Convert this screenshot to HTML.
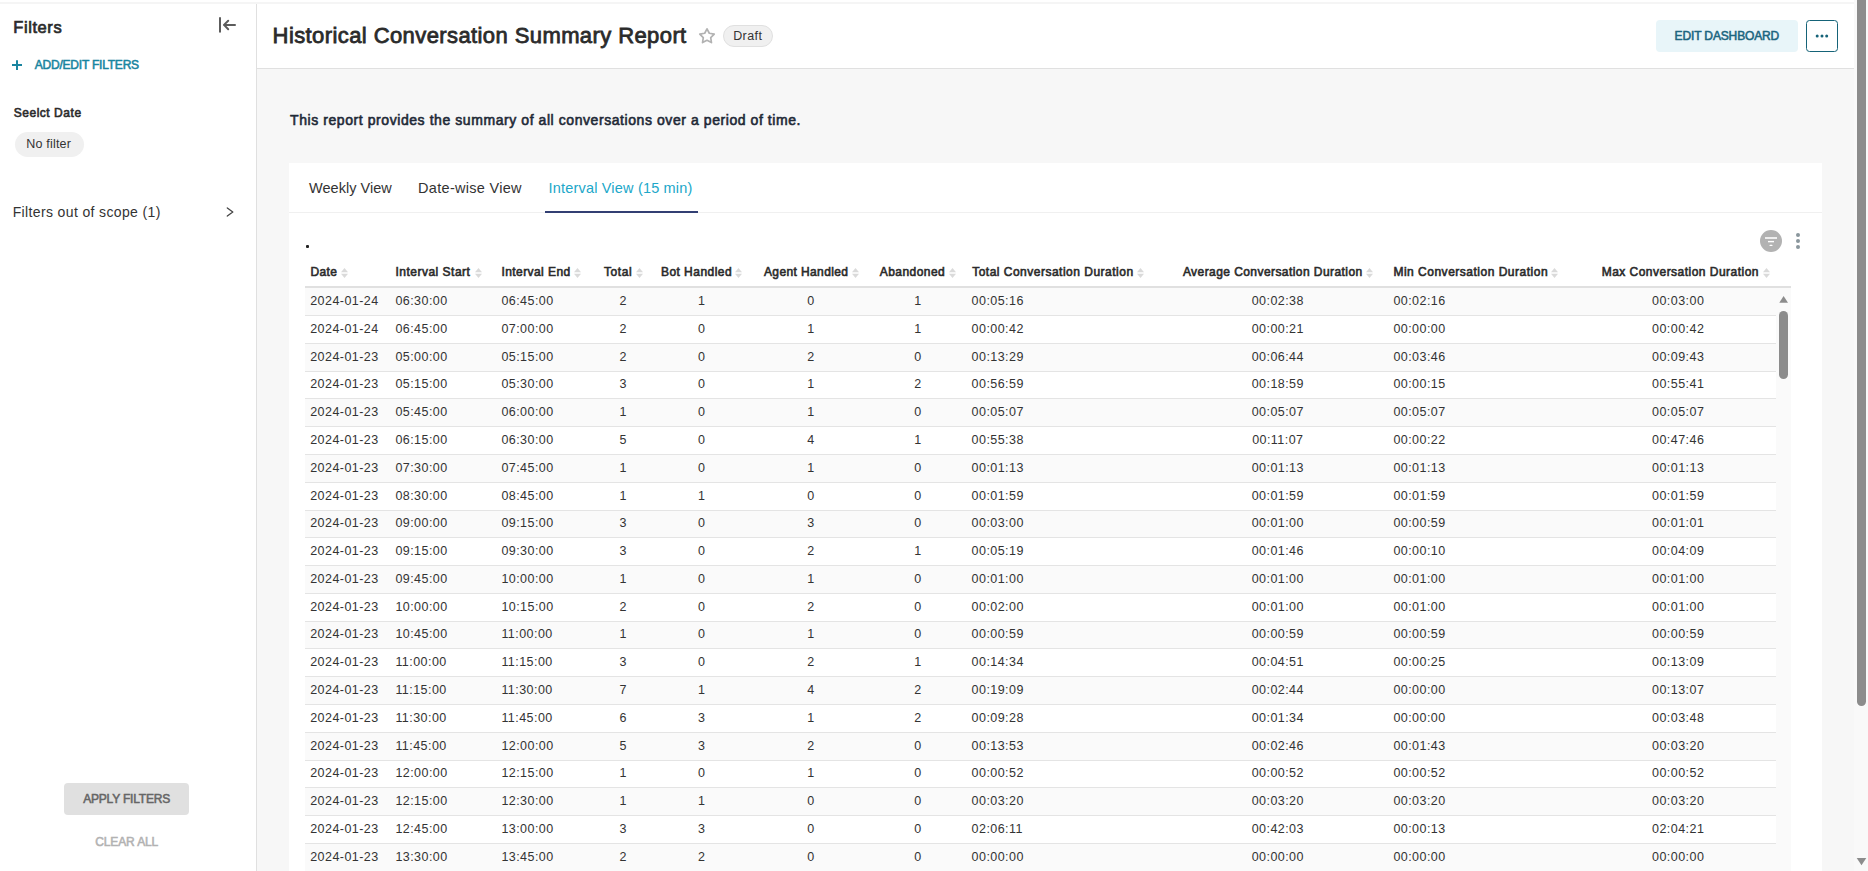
<!DOCTYPE html>
<html><head><meta charset="utf-8"><title>Historical Conversation Summary Report</title>
<style>
html,body{margin:0;padding:0}
body{width:1868px;height:871px;overflow:hidden;position:relative;background:#fff;font-family:"Liberation Sans",sans-serif}
.t{position:absolute;white-space:nowrap;line-height:normal}
.a{position:absolute}
.c{position:absolute;white-space:nowrap;line-height:normal;font-size:12.5px;color:#333333;letter-spacing:0.45px}
.cc{position:absolute;white-space:nowrap;line-height:normal;font-size:12.5px;color:#333333;letter-spacing:0.45px;width:80px;text-align:center}
</style></head><body>

<div class="a" style="left:0;top:2px;width:1854px;height:2px;background:#f5f5f5"></div>
<div class="a" style="left:256px;top:4px;width:1px;height:867px;background:#e0e0e0"></div>
<div class="a" style="left:257px;top:69px;width:1597px;height:802px;background:#f7f7f7"></div>
<div class="a" style="left:257px;top:68px;width:1597px;height:1px;background:#e0e0e0"></div>
<div class="a" style="left:289px;top:163px;width:1533px;height:708px;background:#fff"></div>
<div class="a" style="left:289px;top:212px;width:1533px;height:1px;background:#f0f0f0"></div>
<div class="a" style="left:545px;top:211px;width:153px;height:2px;background:#323f73"></div>
<svg class="a" style="left:212px;top:12px" width="30" height="26" viewBox="0 0 30 26">
<g stroke="#5c5c5c" stroke-width="2" stroke-linecap="round" stroke-linejoin="round" fill="none">
<line x1="8" y1="6" x2="8" y2="19.7"/><line x1="12.5" y1="12.9" x2="23" y2="12.9"/><polyline points="16.2,8.7 12,12.9 16.2,17.2"/></g></svg>
<svg class="a" style="left:10px;top:58px" width="14" height="14" viewBox="0 0 14 14">
<g stroke="#1a85a0" stroke-width="2" fill="none"><line x1="2" y1="7" x2="12" y2="7"/><line x1="7" y1="2.2" x2="7" y2="12"/></g></svg>
<div class="a" style="left:15px;top:132px;width:69px;height:25px;border-radius:13px;background:#f0f0f0"></div>
<svg class="a" style="left:222px;top:204px" width="16" height="16" viewBox="0 0 16 16">
<polyline points="5.3,4 10.8,8 5.3,12" stroke="#444" stroke-width="1.3" fill="none" stroke-linecap="round" stroke-linejoin="round"/></svg>
<div class="a" style="left:64px;top:783px;width:125px;height:32px;border-radius:4px;background:#e0e0e0"></div>
<svg class="a" style="left:697px;top:26px" width="20" height="20" viewBox="0 0 20 20">
<polygon points="10.00,2.80 12.29,7.24 17.23,8.05 13.71,11.61 14.47,16.55 10.00,14.30 5.53,16.55 6.29,11.61 2.77,8.05 7.71,7.24" fill="none" stroke="#b2b2b2" stroke-width="1.7" stroke-linejoin="round"/></svg>
<div class="a" style="left:723px;top:25px;width:48px;height:20px;border:1px solid #e0e0e0;border-radius:11px;background:#f0f0f0"></div>
<div class="a" style="left:1656px;top:20px;width:142px;height:32px;border-radius:4px;background:#e8f5f9"></div>
<div class="a" style="left:1806px;top:20px;width:30px;height:30px;border:1px solid #156378;border-radius:3.5px;background:#fff"></div>
<svg class="a" style="left:1806px;top:20px" width="32" height="32" viewBox="0 0 32 32"><g fill="#156378">
<circle cx="11.2" cy="16" r="1.5"/><circle cx="16" cy="16" r="1.5"/><circle cx="20.7" cy="16" r="1.5"/></g></svg>
<div class="a" style="left:306px;top:245px;width:3px;height:3px;background:#222;border-radius:1px"></div>
<svg class="a" style="left:1758px;top:228px" width="48" height="26" viewBox="0 0 48 26">
<circle cx="13" cy="13" r="11" fill="#b2b2b2"/>
<rect x="7" y="9" width="12" height="2" fill="#eeeeee"/><rect x="10" y="12.9" width="6" height="1.4" fill="#fff"/><rect x="11.5" y="16.7" width="3" height="1.3" rx="0.6" fill="#fff"/>
<g fill="#8a969c"><circle cx="40" cy="7" r="2"/><circle cx="40" cy="13" r="2"/><circle cx="40" cy="19" r="2"/></g></svg>
<div class="a" style="left:305px;top:286px;width:1486px;height:2px;background:#e0e0e0"></div>
<div class="a" style="left:305px;top:288px;width:1471px;height:27px;background:#fafafa"></div>
<div class="a" style="left:305px;top:315px;width:1471px;height:1px;background:#e4e4e4"></div>
<div class="a" style="left:305px;top:316px;width:1471px;height:27px;background:#ffffff"></div>
<div class="a" style="left:305px;top:343px;width:1471px;height:1px;background:#e4e4e4"></div>
<div class="a" style="left:305px;top:344px;width:1471px;height:27px;background:#fafafa"></div>
<div class="a" style="left:305px;top:371px;width:1471px;height:1px;background:#e4e4e4"></div>
<div class="a" style="left:305px;top:372px;width:1471px;height:26px;background:#ffffff"></div>
<div class="a" style="left:305px;top:398px;width:1471px;height:1px;background:#e4e4e4"></div>
<div class="a" style="left:305px;top:399px;width:1471px;height:27px;background:#fafafa"></div>
<div class="a" style="left:305px;top:426px;width:1471px;height:1px;background:#e4e4e4"></div>
<div class="a" style="left:305px;top:427px;width:1471px;height:27px;background:#ffffff"></div>
<div class="a" style="left:305px;top:454px;width:1471px;height:1px;background:#e4e4e4"></div>
<div class="a" style="left:305px;top:455px;width:1471px;height:27px;background:#fafafa"></div>
<div class="a" style="left:305px;top:482px;width:1471px;height:1px;background:#e4e4e4"></div>
<div class="a" style="left:305px;top:483px;width:1471px;height:27px;background:#ffffff"></div>
<div class="a" style="left:305px;top:510px;width:1471px;height:1px;background:#e4e4e4"></div>
<div class="a" style="left:305px;top:511px;width:1471px;height:26px;background:#fafafa"></div>
<div class="a" style="left:305px;top:537px;width:1471px;height:1px;background:#e4e4e4"></div>
<div class="a" style="left:305px;top:538px;width:1471px;height:27px;background:#ffffff"></div>
<div class="a" style="left:305px;top:565px;width:1471px;height:1px;background:#e4e4e4"></div>
<div class="a" style="left:305px;top:566px;width:1471px;height:27px;background:#fafafa"></div>
<div class="a" style="left:305px;top:593px;width:1471px;height:1px;background:#e4e4e4"></div>
<div class="a" style="left:305px;top:594px;width:1471px;height:27px;background:#ffffff"></div>
<div class="a" style="left:305px;top:621px;width:1471px;height:1px;background:#e4e4e4"></div>
<div class="a" style="left:305px;top:622px;width:1471px;height:26px;background:#fafafa"></div>
<div class="a" style="left:305px;top:648px;width:1471px;height:1px;background:#e4e4e4"></div>
<div class="a" style="left:305px;top:649px;width:1471px;height:27px;background:#ffffff"></div>
<div class="a" style="left:305px;top:676px;width:1471px;height:1px;background:#e4e4e4"></div>
<div class="a" style="left:305px;top:677px;width:1471px;height:27px;background:#fafafa"></div>
<div class="a" style="left:305px;top:704px;width:1471px;height:1px;background:#e4e4e4"></div>
<div class="a" style="left:305px;top:705px;width:1471px;height:27px;background:#ffffff"></div>
<div class="a" style="left:305px;top:732px;width:1471px;height:1px;background:#e4e4e4"></div>
<div class="a" style="left:305px;top:733px;width:1471px;height:27px;background:#fafafa"></div>
<div class="a" style="left:305px;top:760px;width:1471px;height:1px;background:#e4e4e4"></div>
<div class="a" style="left:305px;top:761px;width:1471px;height:26px;background:#ffffff"></div>
<div class="a" style="left:305px;top:787px;width:1471px;height:1px;background:#e4e4e4"></div>
<div class="a" style="left:305px;top:788px;width:1471px;height:27px;background:#fafafa"></div>
<div class="a" style="left:305px;top:815px;width:1471px;height:1px;background:#e4e4e4"></div>
<div class="a" style="left:305px;top:816px;width:1471px;height:27px;background:#ffffff"></div>
<div class="a" style="left:305px;top:843px;width:1471px;height:1px;background:#e4e4e4"></div>
<div class="a" style="left:305px;top:844px;width:1471px;height:27px;background:#fafafa"></div>
<div class="a" style="left:305px;top:871px;width:1471px;height:1px;background:#e4e4e4"></div>
<div class="a" style="left:1776px;top:288px;width:15px;height:583px;background:#fafafa"></div>
<svg class="a" style="left:1776px;top:292px" width="15" height="14" viewBox="0 0 15 14"><polygon points="3.3,10.7 7.6,4 12,10.7" fill="#8c8c8c"/></svg>
<div class="a" style="left:1779px;top:311px;width:9px;height:68px;border-radius:4.5px;background:#8c8c8c"></div>
<div class="a" style="left:1854px;top:0;width:14px;height:871px;background:#f9f9f9"></div>
<div class="a" style="left:1857px;top:-6px;width:9px;height:712px;border-radius:4.5px;background:#8c8c8c"></div>
<svg class="a" style="left:1854px;top:855px" width="14" height="14" viewBox="0 0 14 14"><polygon points="2.7,3 7.5,10.3 12.3,3" fill="#8c8c8c"/></svg>
<div id="t0" class="t" style="left:13.34px;top:18px;font-size:16.5px;font-weight:400;color:#2b2b2b;letter-spacing:0.570px;-webkit-text-stroke:0.7px #2b2b2b">Filters</div>
<div id="t1" class="t" style="left:34.70px;top:58px;font-size:12px;font-weight:400;color:#1a85a0;letter-spacing:-0.210px;-webkit-text-stroke:0.55px #1a85a0">ADD/EDIT FILTERS</div>
<div id="t2" class="t" style="left:13.66px;top:106px;font-size:12px;font-weight:400;color:#2b2b2b;letter-spacing:0.540px;-webkit-text-stroke:0.6px #2b2b2b">Seelct Date</div>
<div id="t3" class="t" style="left:26.18px;top:137px;font-size:12.5px;font-weight:400;color:#333333;letter-spacing:0.207px">No filter</div>
<div id="t4" class="t" style="left:12.68px;top:204px;font-size:14px;font-weight:400;color:#333333;letter-spacing:0.364px">Filters out of scope (1)</div>
<div id="t5" class="t" style="left:83.15px;top:792px;font-size:12px;font-weight:400;color:#666666;letter-spacing:-0.186px;-webkit-text-stroke:0.55px #666666">APPLY FILTERS</div>
<div id="t6" class="t" style="left:95.15px;top:835px;font-size:12px;font-weight:400;color:#b2b2b2;letter-spacing:-0.115px;-webkit-text-stroke:0.55px #b2b2b2">CLEAR ALL</div>
<div id="t7" class="t" style="left:272.60px;top:23px;font-size:22px;font-weight:400;color:#2b2b2b;letter-spacing:0.407px;-webkit-text-stroke:0.8px #2b2b2b">Historical Conversation Summary Report</div>
<div id="t8" class="t" style="left:733.18px;top:29px;font-size:12.5px;font-weight:400;color:#333333;letter-spacing:0.414px">Draft</div>
<div id="t9" class="t" style="left:1674.60px;top:29px;font-size:12px;font-weight:400;color:#1c6680;letter-spacing:-0.139px;-webkit-text-stroke:0.55px #1c6680">EDIT DASHBOARD</div>
<div id="t10" class="t" style="left:290.08px;top:112px;font-size:14px;font-weight:400;color:#1f2a37;letter-spacing:0.570px;-webkit-text-stroke:0.6px #1f2a37">This report provides the summary of all conversations over a period of time.</div>
<div id="t11" class="t" style="left:309.00px;top:180px;font-size:14.5px;font-weight:400;color:#333333;letter-spacing:0.036px">Weekly View</div>
<div id="t12" class="t" style="left:418.10px;top:180px;font-size:14.5px;font-weight:400;color:#333333;letter-spacing:0.291px">Date-wise View</div>
<div id="t13" class="t" style="left:548.52px;top:180px;font-size:14.5px;font-weight:400;color:#20a7c9;letter-spacing:0.185px">Interval View (15 min)</div>
<div id="t14" class="t" style="left:310.58px;top:265px;font-size:12px;font-weight:400;color:#2b2b2b;letter-spacing:0.300px;-webkit-text-stroke:0.6px #2b2b2b">Date</div>
<div id="t15" class="t" style="left:395.42px;top:265px;font-size:12px;font-weight:400;color:#2b2b2b;letter-spacing:0.499px;-webkit-text-stroke:0.6px #2b2b2b">Interval Start</div>
<div id="t16" class="t" style="left:501.42px;top:265px;font-size:12px;font-weight:400;color:#2b2b2b;letter-spacing:0.429px;-webkit-text-stroke:0.6px #2b2b2b">Interval End</div>
<div id="t17" class="t" style="left:604.08px;top:265px;font-size:12px;font-weight:400;color:#2b2b2b;letter-spacing:0.540px;-webkit-text-stroke:0.6px #2b2b2b">Total</div>
<div id="t18" class="t" style="left:660.92px;top:265px;font-size:12px;font-weight:400;color:#2b2b2b;letter-spacing:0.468px;-webkit-text-stroke:0.6px #2b2b2b">Bot Handled</div>
<div id="t19" class="t" style="left:763.98px;top:265px;font-size:12px;font-weight:400;color:#2b2b2b;letter-spacing:0.390px;-webkit-text-stroke:0.6px #2b2b2b">Agent Handled</div>
<div id="t20" class="t" style="left:879.74px;top:265px;font-size:12px;font-weight:400;color:#2b2b2b;letter-spacing:0.450px;-webkit-text-stroke:0.6px #2b2b2b">Abandoned</div>
<div id="t21" class="t" style="left:972.16px;top:265px;font-size:12px;font-weight:400;color:#2b2b2b;letter-spacing:0.493px;-webkit-text-stroke:0.6px #2b2b2b">Total Conversation Duration</div>
<div id="t22" class="t" style="left:1182.90px;top:265px;font-size:12px;font-weight:400;color:#2b2b2b;letter-spacing:0.431px;-webkit-text-stroke:0.6px #2b2b2b">Average Conversation Duration</div>
<div id="t23" class="t" style="left:1393.42px;top:265px;font-size:12px;font-weight:400;color:#2b2b2b;letter-spacing:0.505px;-webkit-text-stroke:0.6px #2b2b2b">Min Conversation Duration</div>
<div id="t24" class="t" style="left:1601.66px;top:265px;font-size:12px;font-weight:400;color:#2b2b2b;letter-spacing:0.478px;-webkit-text-stroke:0.6px #2b2b2b">Max Conversation Duration</div>
<svg class="a" style="left:340.9px;top:268px" width="7" height="10" viewBox="0 0 7 10"><g fill="#dadada"><polygon points="0,4.2 3.5,0 7,4.2"/><polygon points="0,5.8 3.5,10 7,5.8"/></g></svg>
<svg class="a" style="left:474.9px;top:268px" width="7" height="10" viewBox="0 0 7 10"><g fill="#dadada"><polygon points="0,4.2 3.5,0 7,4.2"/><polygon points="0,5.8 3.5,10 7,5.8"/></g></svg>
<svg class="a" style="left:574.4px;top:268px" width="7" height="10" viewBox="0 0 7 10"><g fill="#dadada"><polygon points="0,4.2 3.5,0 7,4.2"/><polygon points="0,5.8 3.5,10 7,5.8"/></g></svg>
<svg class="a" style="left:635.6px;top:268px" width="7" height="10" viewBox="0 0 7 10"><g fill="#dadada"><polygon points="0,4.2 3.5,0 7,4.2"/><polygon points="0,5.8 3.5,10 7,5.8"/></g></svg>
<svg class="a" style="left:735.4px;top:268px" width="7" height="10" viewBox="0 0 7 10"><g fill="#dadada"><polygon points="0,4.2 3.5,0 7,4.2"/><polygon points="0,5.8 3.5,10 7,5.8"/></g></svg>
<svg class="a" style="left:852.2px;top:268px" width="7" height="10" viewBox="0 0 7 10"><g fill="#dadada"><polygon points="0,4.2 3.5,0 7,4.2"/><polygon points="0,5.8 3.5,10 7,5.8"/></g></svg>
<svg class="a" style="left:949.1px;top:268px" width="7" height="10" viewBox="0 0 7 10"><g fill="#dadada"><polygon points="0,4.2 3.5,0 7,4.2"/><polygon points="0,5.8 3.5,10 7,5.8"/></g></svg>
<svg class="a" style="left:1137.0px;top:268px" width="7" height="10" viewBox="0 0 7 10"><g fill="#dadada"><polygon points="0,4.2 3.5,0 7,4.2"/><polygon points="0,5.8 3.5,10 7,5.8"/></g></svg>
<svg class="a" style="left:1366.1px;top:268px" width="7" height="10" viewBox="0 0 7 10"><g fill="#dadada"><polygon points="0,4.2 3.5,0 7,4.2"/><polygon points="0,5.8 3.5,10 7,5.8"/></g></svg>
<svg class="a" style="left:1551.3px;top:268px" width="7" height="10" viewBox="0 0 7 10"><g fill="#dadada"><polygon points="0,4.2 3.5,0 7,4.2"/><polygon points="0,5.8 3.5,10 7,5.8"/></g></svg>
<svg class="a" style="left:1762.8px;top:268px" width="7" height="10" viewBox="0 0 7 10"><g fill="#dadada"><polygon points="0,4.2 3.5,0 7,4.2"/><polygon points="0,5.8 3.5,10 7,5.8"/></g></svg>
<div class="c" style="left:310.2px;top:294px">2024-01-24</div>
<div class="c" style="left:395.4px;top:294px">06:30:00</div>
<div class="c" style="left:501.4px;top:294px">06:45:00</div>
<div class="cc" style="left:583.3px;top:294px">2</div>
<div class="cc" style="left:661.7px;top:294px">1</div>
<div class="cc" style="left:771.0px;top:294px">0</div>
<div class="cc" style="left:878.0px;top:294px">1</div>
<div class="c" style="left:971.6px;top:294px">00:05:16</div>
<div class="cc" style="left:1237.8px;top:294px">00:02:38</div>
<div class="c" style="left:1393.4px;top:294px">00:02:16</div>
<div class="cc" style="left:1638.2px;top:294px">00:03:00</div>
<div class="c" style="left:310.2px;top:322px">2024-01-24</div>
<div class="c" style="left:395.4px;top:322px">06:45:00</div>
<div class="c" style="left:501.4px;top:322px">07:00:00</div>
<div class="cc" style="left:583.3px;top:322px">2</div>
<div class="cc" style="left:661.7px;top:322px">0</div>
<div class="cc" style="left:771.0px;top:322px">1</div>
<div class="cc" style="left:878.0px;top:322px">1</div>
<div class="c" style="left:971.6px;top:322px">00:00:42</div>
<div class="cc" style="left:1237.8px;top:322px">00:00:21</div>
<div class="c" style="left:1393.4px;top:322px">00:00:00</div>
<div class="cc" style="left:1638.2px;top:322px">00:00:42</div>
<div class="c" style="left:310.2px;top:350px">2024-01-23</div>
<div class="c" style="left:395.4px;top:350px">05:00:00</div>
<div class="c" style="left:501.4px;top:350px">05:15:00</div>
<div class="cc" style="left:583.3px;top:350px">2</div>
<div class="cc" style="left:661.7px;top:350px">0</div>
<div class="cc" style="left:771.0px;top:350px">2</div>
<div class="cc" style="left:878.0px;top:350px">0</div>
<div class="c" style="left:971.6px;top:350px">00:13:29</div>
<div class="cc" style="left:1237.8px;top:350px">00:06:44</div>
<div class="c" style="left:1393.4px;top:350px">00:03:46</div>
<div class="cc" style="left:1638.2px;top:350px">00:09:43</div>
<div class="c" style="left:310.2px;top:377px">2024-01-23</div>
<div class="c" style="left:395.4px;top:377px">05:15:00</div>
<div class="c" style="left:501.4px;top:377px">05:30:00</div>
<div class="cc" style="left:583.3px;top:377px">3</div>
<div class="cc" style="left:661.7px;top:377px">0</div>
<div class="cc" style="left:771.0px;top:377px">1</div>
<div class="cc" style="left:878.0px;top:377px">2</div>
<div class="c" style="left:971.6px;top:377px">00:56:59</div>
<div class="cc" style="left:1237.8px;top:377px">00:18:59</div>
<div class="c" style="left:1393.4px;top:377px">00:00:15</div>
<div class="cc" style="left:1638.2px;top:377px">00:55:41</div>
<div class="c" style="left:310.2px;top:405px">2024-01-23</div>
<div class="c" style="left:395.4px;top:405px">05:45:00</div>
<div class="c" style="left:501.4px;top:405px">06:00:00</div>
<div class="cc" style="left:583.3px;top:405px">1</div>
<div class="cc" style="left:661.7px;top:405px">0</div>
<div class="cc" style="left:771.0px;top:405px">1</div>
<div class="cc" style="left:878.0px;top:405px">0</div>
<div class="c" style="left:971.6px;top:405px">00:05:07</div>
<div class="cc" style="left:1237.8px;top:405px">00:05:07</div>
<div class="c" style="left:1393.4px;top:405px">00:05:07</div>
<div class="cc" style="left:1638.2px;top:405px">00:05:07</div>
<div class="c" style="left:310.2px;top:433px">2024-01-23</div>
<div class="c" style="left:395.4px;top:433px">06:15:00</div>
<div class="c" style="left:501.4px;top:433px">06:30:00</div>
<div class="cc" style="left:583.3px;top:433px">5</div>
<div class="cc" style="left:661.7px;top:433px">0</div>
<div class="cc" style="left:771.0px;top:433px">4</div>
<div class="cc" style="left:878.0px;top:433px">1</div>
<div class="c" style="left:971.6px;top:433px">00:55:38</div>
<div class="cc" style="left:1237.8px;top:433px">00:11:07</div>
<div class="c" style="left:1393.4px;top:433px">00:00:22</div>
<div class="cc" style="left:1638.2px;top:433px">00:47:46</div>
<div class="c" style="left:310.2px;top:461px">2024-01-23</div>
<div class="c" style="left:395.4px;top:461px">07:30:00</div>
<div class="c" style="left:501.4px;top:461px">07:45:00</div>
<div class="cc" style="left:583.3px;top:461px">1</div>
<div class="cc" style="left:661.7px;top:461px">0</div>
<div class="cc" style="left:771.0px;top:461px">1</div>
<div class="cc" style="left:878.0px;top:461px">0</div>
<div class="c" style="left:971.6px;top:461px">00:01:13</div>
<div class="cc" style="left:1237.8px;top:461px">00:01:13</div>
<div class="c" style="left:1393.4px;top:461px">00:01:13</div>
<div class="cc" style="left:1638.2px;top:461px">00:01:13</div>
<div class="c" style="left:310.2px;top:489px">2024-01-23</div>
<div class="c" style="left:395.4px;top:489px">08:30:00</div>
<div class="c" style="left:501.4px;top:489px">08:45:00</div>
<div class="cc" style="left:583.3px;top:489px">1</div>
<div class="cc" style="left:661.7px;top:489px">1</div>
<div class="cc" style="left:771.0px;top:489px">0</div>
<div class="cc" style="left:878.0px;top:489px">0</div>
<div class="c" style="left:971.6px;top:489px">00:01:59</div>
<div class="cc" style="left:1237.8px;top:489px">00:01:59</div>
<div class="c" style="left:1393.4px;top:489px">00:01:59</div>
<div class="cc" style="left:1638.2px;top:489px">00:01:59</div>
<div class="c" style="left:310.2px;top:516px">2024-01-23</div>
<div class="c" style="left:395.4px;top:516px">09:00:00</div>
<div class="c" style="left:501.4px;top:516px">09:15:00</div>
<div class="cc" style="left:583.3px;top:516px">3</div>
<div class="cc" style="left:661.7px;top:516px">0</div>
<div class="cc" style="left:771.0px;top:516px">3</div>
<div class="cc" style="left:878.0px;top:516px">0</div>
<div class="c" style="left:971.6px;top:516px">00:03:00</div>
<div class="cc" style="left:1237.8px;top:516px">00:01:00</div>
<div class="c" style="left:1393.4px;top:516px">00:00:59</div>
<div class="cc" style="left:1638.2px;top:516px">00:01:01</div>
<div class="c" style="left:310.2px;top:544px">2024-01-23</div>
<div class="c" style="left:395.4px;top:544px">09:15:00</div>
<div class="c" style="left:501.4px;top:544px">09:30:00</div>
<div class="cc" style="left:583.3px;top:544px">3</div>
<div class="cc" style="left:661.7px;top:544px">0</div>
<div class="cc" style="left:771.0px;top:544px">2</div>
<div class="cc" style="left:878.0px;top:544px">1</div>
<div class="c" style="left:971.6px;top:544px">00:05:19</div>
<div class="cc" style="left:1237.8px;top:544px">00:01:46</div>
<div class="c" style="left:1393.4px;top:544px">00:00:10</div>
<div class="cc" style="left:1638.2px;top:544px">00:04:09</div>
<div class="c" style="left:310.2px;top:572px">2024-01-23</div>
<div class="c" style="left:395.4px;top:572px">09:45:00</div>
<div class="c" style="left:501.4px;top:572px">10:00:00</div>
<div class="cc" style="left:583.3px;top:572px">1</div>
<div class="cc" style="left:661.7px;top:572px">0</div>
<div class="cc" style="left:771.0px;top:572px">1</div>
<div class="cc" style="left:878.0px;top:572px">0</div>
<div class="c" style="left:971.6px;top:572px">00:01:00</div>
<div class="cc" style="left:1237.8px;top:572px">00:01:00</div>
<div class="c" style="left:1393.4px;top:572px">00:01:00</div>
<div class="cc" style="left:1638.2px;top:572px">00:01:00</div>
<div class="c" style="left:310.2px;top:600px">2024-01-23</div>
<div class="c" style="left:395.4px;top:600px">10:00:00</div>
<div class="c" style="left:501.4px;top:600px">10:15:00</div>
<div class="cc" style="left:583.3px;top:600px">2</div>
<div class="cc" style="left:661.7px;top:600px">0</div>
<div class="cc" style="left:771.0px;top:600px">2</div>
<div class="cc" style="left:878.0px;top:600px">0</div>
<div class="c" style="left:971.6px;top:600px">00:02:00</div>
<div class="cc" style="left:1237.8px;top:600px">00:01:00</div>
<div class="c" style="left:1393.4px;top:600px">00:01:00</div>
<div class="cc" style="left:1638.2px;top:600px">00:01:00</div>
<div class="c" style="left:310.2px;top:627px">2024-01-23</div>
<div class="c" style="left:395.4px;top:627px">10:45:00</div>
<div class="c" style="left:501.4px;top:627px">11:00:00</div>
<div class="cc" style="left:583.3px;top:627px">1</div>
<div class="cc" style="left:661.7px;top:627px">0</div>
<div class="cc" style="left:771.0px;top:627px">1</div>
<div class="cc" style="left:878.0px;top:627px">0</div>
<div class="c" style="left:971.6px;top:627px">00:00:59</div>
<div class="cc" style="left:1237.8px;top:627px">00:00:59</div>
<div class="c" style="left:1393.4px;top:627px">00:00:59</div>
<div class="cc" style="left:1638.2px;top:627px">00:00:59</div>
<div class="c" style="left:310.2px;top:655px">2024-01-23</div>
<div class="c" style="left:395.4px;top:655px">11:00:00</div>
<div class="c" style="left:501.4px;top:655px">11:15:00</div>
<div class="cc" style="left:583.3px;top:655px">3</div>
<div class="cc" style="left:661.7px;top:655px">0</div>
<div class="cc" style="left:771.0px;top:655px">2</div>
<div class="cc" style="left:878.0px;top:655px">1</div>
<div class="c" style="left:971.6px;top:655px">00:14:34</div>
<div class="cc" style="left:1237.8px;top:655px">00:04:51</div>
<div class="c" style="left:1393.4px;top:655px">00:00:25</div>
<div class="cc" style="left:1638.2px;top:655px">00:13:09</div>
<div class="c" style="left:310.2px;top:683px">2024-01-23</div>
<div class="c" style="left:395.4px;top:683px">11:15:00</div>
<div class="c" style="left:501.4px;top:683px">11:30:00</div>
<div class="cc" style="left:583.3px;top:683px">7</div>
<div class="cc" style="left:661.7px;top:683px">1</div>
<div class="cc" style="left:771.0px;top:683px">4</div>
<div class="cc" style="left:878.0px;top:683px">2</div>
<div class="c" style="left:971.6px;top:683px">00:19:09</div>
<div class="cc" style="left:1237.8px;top:683px">00:02:44</div>
<div class="c" style="left:1393.4px;top:683px">00:00:00</div>
<div class="cc" style="left:1638.2px;top:683px">00:13:07</div>
<div class="c" style="left:310.2px;top:711px">2024-01-23</div>
<div class="c" style="left:395.4px;top:711px">11:30:00</div>
<div class="c" style="left:501.4px;top:711px">11:45:00</div>
<div class="cc" style="left:583.3px;top:711px">6</div>
<div class="cc" style="left:661.7px;top:711px">3</div>
<div class="cc" style="left:771.0px;top:711px">1</div>
<div class="cc" style="left:878.0px;top:711px">2</div>
<div class="c" style="left:971.6px;top:711px">00:09:28</div>
<div class="cc" style="left:1237.8px;top:711px">00:01:34</div>
<div class="c" style="left:1393.4px;top:711px">00:00:00</div>
<div class="cc" style="left:1638.2px;top:711px">00:03:48</div>
<div class="c" style="left:310.2px;top:739px">2024-01-23</div>
<div class="c" style="left:395.4px;top:739px">11:45:00</div>
<div class="c" style="left:501.4px;top:739px">12:00:00</div>
<div class="cc" style="left:583.3px;top:739px">5</div>
<div class="cc" style="left:661.7px;top:739px">3</div>
<div class="cc" style="left:771.0px;top:739px">2</div>
<div class="cc" style="left:878.0px;top:739px">0</div>
<div class="c" style="left:971.6px;top:739px">00:13:53</div>
<div class="cc" style="left:1237.8px;top:739px">00:02:46</div>
<div class="c" style="left:1393.4px;top:739px">00:01:43</div>
<div class="cc" style="left:1638.2px;top:739px">00:03:20</div>
<div class="c" style="left:310.2px;top:766px">2024-01-23</div>
<div class="c" style="left:395.4px;top:766px">12:00:00</div>
<div class="c" style="left:501.4px;top:766px">12:15:00</div>
<div class="cc" style="left:583.3px;top:766px">1</div>
<div class="cc" style="left:661.7px;top:766px">0</div>
<div class="cc" style="left:771.0px;top:766px">1</div>
<div class="cc" style="left:878.0px;top:766px">0</div>
<div class="c" style="left:971.6px;top:766px">00:00:52</div>
<div class="cc" style="left:1237.8px;top:766px">00:00:52</div>
<div class="c" style="left:1393.4px;top:766px">00:00:52</div>
<div class="cc" style="left:1638.2px;top:766px">00:00:52</div>
<div class="c" style="left:310.2px;top:794px">2024-01-23</div>
<div class="c" style="left:395.4px;top:794px">12:15:00</div>
<div class="c" style="left:501.4px;top:794px">12:30:00</div>
<div class="cc" style="left:583.3px;top:794px">1</div>
<div class="cc" style="left:661.7px;top:794px">1</div>
<div class="cc" style="left:771.0px;top:794px">0</div>
<div class="cc" style="left:878.0px;top:794px">0</div>
<div class="c" style="left:971.6px;top:794px">00:03:20</div>
<div class="cc" style="left:1237.8px;top:794px">00:03:20</div>
<div class="c" style="left:1393.4px;top:794px">00:03:20</div>
<div class="cc" style="left:1638.2px;top:794px">00:03:20</div>
<div class="c" style="left:310.2px;top:822px">2024-01-23</div>
<div class="c" style="left:395.4px;top:822px">12:45:00</div>
<div class="c" style="left:501.4px;top:822px">13:00:00</div>
<div class="cc" style="left:583.3px;top:822px">3</div>
<div class="cc" style="left:661.7px;top:822px">3</div>
<div class="cc" style="left:771.0px;top:822px">0</div>
<div class="cc" style="left:878.0px;top:822px">0</div>
<div class="c" style="left:971.6px;top:822px">02:06:11</div>
<div class="cc" style="left:1237.8px;top:822px">00:42:03</div>
<div class="c" style="left:1393.4px;top:822px">00:00:13</div>
<div class="cc" style="left:1638.2px;top:822px">02:04:21</div>
<div class="c" style="left:310.2px;top:850px">2024-01-23</div>
<div class="c" style="left:395.4px;top:850px">13:30:00</div>
<div class="c" style="left:501.4px;top:850px">13:45:00</div>
<div class="cc" style="left:583.3px;top:850px">2</div>
<div class="cc" style="left:661.7px;top:850px">2</div>
<div class="cc" style="left:771.0px;top:850px">0</div>
<div class="cc" style="left:878.0px;top:850px">0</div>
<div class="c" style="left:971.6px;top:850px">00:00:00</div>
<div class="cc" style="left:1237.8px;top:850px">00:00:00</div>
<div class="c" style="left:1393.4px;top:850px">00:00:00</div>
<div class="cc" style="left:1638.2px;top:850px">00:00:00</div>
</body></html>
